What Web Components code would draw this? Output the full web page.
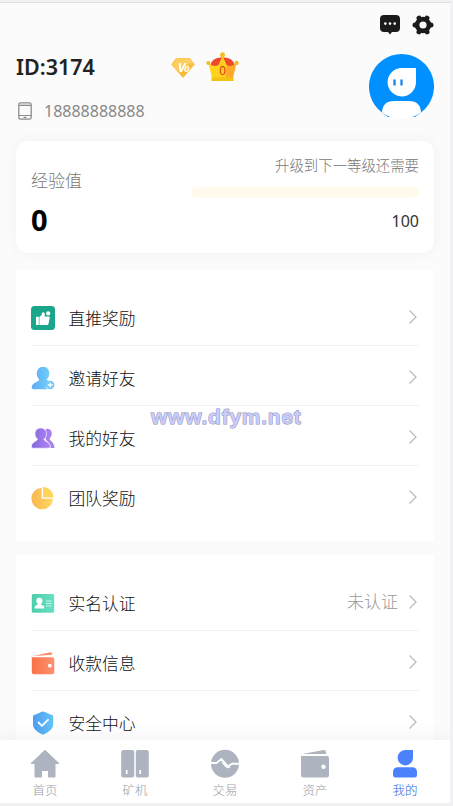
<!DOCTYPE html>
<html lang="zh-CN">
<head>
<meta charset="utf-8">
<title>我的</title>
<style>
html, body { margin: 0; height: 100%; overflow: hidden; }
body { background: #f1f1f3; font-family: "Noto Sans", "Noto Sans CJK SC", sans-serif; color: #222; }
</style>
</head>
<body>
<profile-page></profile-page>
<script>
const icons = {
  chat: '<svg viewBox="0 0 22 22"><path fill="#1b1b1b" d="M5 1h12q4 0 4 4v9q0 4-4 4h-4l-2 2.500L9 18H5q-4 0-4-4V5q0-4 4-4z"/><g fill="#fff"><circle cx="6.300" cy="9.600" r="1.300"/><circle cx="11" cy="9.600" r="1.300"/><circle cx="15.700" cy="9.600" r="1.300"/></g></svg>',
  gear: '<svg viewBox="0 0 22 22"><circle cx="11" cy="11" r="5.900" fill="none" stroke="#1b1b1b" stroke-width="4.600"/><path stroke="#1b1b1b" stroke-width="5" stroke-linecap="round" d="M3 11h1M18 11h1M7 4.100l.5.900M14.500 17l.5.900M15 4.100l-.5.900M7.500 17l-.5.900"/></svg>',
  phone: '<svg viewBox="0 0 14 18"><rect x=".8" y=".8" width="12.400" height="16.400" rx="1.800" fill="#fbfbfb" stroke="#8b8b8b" stroke-width="1.300"/><path d="M1 3.500h12M1 13.500h12" stroke="#8b8b8b"/><path d="M1.500 2.300h11" stroke="#ccc"/><path d="M5.500 15.500h3" stroke="#8b8b8b" stroke-width="1.300"/></svg>',
  gem: '<svg viewBox="0 0 24 20"><defs><linearGradient id="g"><stop stop-color="#f8bd35"/><stop offset="1" stop-color="#fdc85b"/></linearGradient></defs><path fill="url(#g)" stroke="url(#g)" stroke-linejoin="round" d="M5 .6h14l4.300 6L12 19.400.7 6.600z"/><path fill="#ffdb78" d="M5 .6h14l2 3L5 13 .7 6.600z" opacity=".5"/><path fill="#f4ad22" d="m12 19.400 11.300-12.800L19 6l-10 10z" opacity=".4"/></svg>',
  crown: '<svg viewBox="0 0 33 30"><path fill="#ed4a2b" d="M4.500 13Q6 6 14 5.500h5Q27 6 28.500 13L25 17H8z"/><path fill="#ffd31c" d="M2.500 11Q7 15.500 12.500 13L16.500 4l.5 4v18H6z"/><path fill="#ffa92b" d="M30.500 11Q26 15.500 20.500 13L16.500 4v22H27z"/><path fill="#ffd31c" d="M16.500 4l4 9-1 13h-3z"/><path fill="#f4c312" d="M5.500 25.500h22V29h-22z"/><circle cx="16.500" cy="2.700" r="2.500" fill="#f5bf24"/><circle cx="2.300" cy="11" r="2" fill="#f6b928"/><circle cx="30.500" cy="11" r="2.200" fill="#f6b928"/></svg>',
  avatar: '<svg viewBox="0 0 65 65"><path fill="#0090ff" d="M32.500 0A32.500 32.500 0 0 1 52 58.500L46 63H19l-6-4.500A32.500 32.500 0 0 1 32.500 0z"/><path fill="#fff" d="M33 14h14v14.500a14.200 14.200 0 1 1-14-14.500z"/><path fill="#fff" d="M13 58.500Q13.500 47 25 47h15q11.500 0 12 11.500-8.500 6.500-19.500 6.500T13 58.500z"/><path stroke="#1685e8" stroke-width="2.300" d="M25.500 25.500v6M32.500 25.500v6"/></svg>',
  thumb: '<svg viewBox="0 0 24 24"><rect width="24" height="24" rx="3.500" fill="#1ba58a"/><path fill="#fff" d="M5 10.700h2.800V19H5zM8.400 11q2.900-1.500 2.600-4 1-1.700 2.700.3.500 1.500-.2 3.200H18q1 .4.600 1.700L17.500 18q-.3 1-1.500 1H8.400z"/><circle cx="17.200" cy="7.400" r="2.100" fill="#fff"/></svg>',
  invite: '<svg viewBox="0 0 24 24"><defs><linearGradient id="i"><stop stop-color="#5dabf5"/><stop offset="1" stop-color="#70cdfb"/></linearGradient></defs><path fill="url(#i)" d="M12 .7c-4 0-6.200 3-6.200 7 0 3 1.400 4.300 2.400 6C8.200 15.500.7 16.500.7 21.500q0 1.700 1.800 1.700h14q-2.500-3-.8-6 .6-1.500 2-2.200-2-.7-2-1.500 2.600-2 2.600-6c0-4-2.300-6.800-6.300-6.800z"/><circle cx="19.200" cy="19" r="4.200" fill="#72c7f9"/><path stroke="#fff" stroke-width="1.300" d="M16.800 19h4.800m-2.400-2.400v4.800"/></svg>',
  friends: '<svg viewBox="0 0 24 24"><defs><linearGradient id="f"><stop stop-color="#8069dd"/><stop offset="1" stop-color="#b383f5"/></linearGradient></defs><path fill="#a680ec" d="M15 3q4-1 5.500 2.500c1 3-.4 5.300-2 7.500 0 1.500 4.700 2.500 5 9h-4q0-5-4-7.500l-1-1.500z"/><path fill="url(#f)" stroke="#fff" stroke-width=".6" d="M9.700 2C6 2 4 4.500 4 8c0 2.500 1.300 4 2.500 5.300C6 15.500.5 16 .4 20.500q0 1.700 1.700 1.700h15.500q1.700 0 1.700-1.700c-.2-4.500-5.800-5-6.300-7.200C14.300 12 15.600 10.500 15.600 8 15.600 4.500 13.500 2 9.700 2z"/></svg>',
  pie: '<svg viewBox="0 0 24 24"><defs><linearGradient id="p"><stop stop-color="#f8b653"/><stop offset="1" stop-color="#ffd85c"/></linearGradient></defs><path fill="url(#p)" d="M10.700 1.700V12.800H22A10.800 10.800 0 1 1 10.700 1.700z"/><path fill="#ffd45a" d="M12 .7A11 11 0 0 1 22.600 11.500H12z"/></svg>',
  id: '<svg viewBox="0 0 24 24"><defs><linearGradient id="d"><stop stop-color="#4ccfa8"/><stop offset="1" stop-color="#69dfc5"/></linearGradient></defs><rect x=".8" y="3" width="22.400" height="18.700" rx="1.500" fill="url(#d)"/><path fill="#fff" d="M8.300 6.800q3.200 0 3.200 3.300 0 1.600-1.500 3 0 1 2 1.500 1.400.6 1.400 2.800H3.500q0-2.200 1.300-2.800 2-.5 2-1.500-1.500-1.400-1.500-3 0-3.300 3-3.300z"/><path stroke="#c8f5ea" stroke-width="1.100" d="M15 10h5.500m-5.500 2.500h5.500M15 15h5.500"/></svg>',
  wallet: '<svg viewBox="0 0 24 24"><defs><linearGradient id="w"><stop stop-color="#fb7248"/><stop offset="1" stop-color="#fd9171"/></linearGradient></defs><path fill="url(#w)" d="M2.500 5 19.500 1.200q1.300-.1 1.600 1.500l.2 1z"/><path fill="url(#w)" d="M.8 5.300q0 .8 1.500.9h19q2 0 2 2v13q0 2-2 2H2.800q-2 0-2-2z"/><circle cx="18.800" cy="14.700" r="1.900" fill="#fff"/></svg>',
  shield: '<svg viewBox="0 0 24 24"><defs><linearGradient id="s"><stop stop-color="#4f9cf1"/><stop offset="1" stop-color="#63c5f9"/></linearGradient></defs><path fill="url(#s)" d="M12 .5q1 0 2 .6 3.500 2.200 7.200 3 1 .3 1 1.400V13c0 5-4.500 8.200-10.200 10.800C6.300 21.200 2 18 2 13V5.500q0-1.200 1-1.400 3.700-.8 7-3Q11 .5 12 .5z"/><path fill="none" stroke="#fff" stroke-width="1.800" stroke-linecap="round" d="m7.500 11.500 3.500 3.300 6-6"/></svg>',
  home: '<svg viewBox="0 0 30 30"><path fill="#adb3bf" stroke="#adb3bf" stroke-linejoin="round" d="M15 1.300 29 14.500h-4V28h-6.500v-6.500h-7V28H5V14.500H1z"/></svg>',
  miner: '<svg viewBox="0 0 30 30"><g fill="#adb3bf"><rect x="1.200" y="1" width="13" height="27.500" rx="2"/><rect x="15.800" y="1" width="13" height="27.500" rx="2"/></g><path stroke="#fff" stroke-width="1.700" d="M6.700 21v4M20.200 21v4"/></svg>',
  trade: '<svg viewBox="0 0 30 30"><circle cx="15" cy="14.800" r="14" fill="#adb3bf"/><path fill="none" stroke="#fff" stroke-width="1.900" stroke-linejoin="round" d="M0 14h6.500l5-4 6.500 7.500 4-2.700h8"/><path fill="none" stroke="#fff" stroke-width="1.300" d="m12 13 4 4.500q2 2 4 .2"/></svg>',
  assets: '<svg viewBox="0 0 30 30"><g fill="#adb3bf"><path d="m2.500 5 21-4q2.500-.2 2.500 2.200V5z"/><path d="M1 6.500q1 .5 2 .5h24q2 0 2 2v17q0 2.500-2.500 2.500h-23Q1 28.500 1 26z"/></g><circle cx="23.500" cy="17.800" r="2.200" fill="#fff"/></svg>',
  me: '<svg viewBox="0 0 30 30"><path fill="#4b82fb" d="M15 1h8v7.500A7.700 7.700 0 1 1 15 1zM8 18.200h14q5 0 5 5v3q0 2.300-2.500 2.300h-19Q3 28.500 3 26.200v-3q0-5 5-5z"/></svg>'
};
const define = (name, html) => customElements.define(name, class extends HTMLElement {
  connectedCallback() {
    if (!this.shadowRoot) this.attachShadow({ mode: 'open' }).innerHTML = typeof html === 'function' ? html(this) : html;
  }
});

define('ui-icon', el => `<style>:host{display:block;flex:none}svg{display:block;width:100%;height:100%}</style>${icons[el.getAttribute('name')]}`);

define('profile-header', `<style>
:host{display:flex;justify-content:space-between;height:138px;padding:0 16px;box-sizing:border-box}
.info{padding-top:51px}
.id{display:flex;align-items:center;height:28px}
b{width:155px;font:600 21.500px/28px "Noto Sans",sans-serif;color:#222;margin-top:-2px}
.badge{display:grid;place-items:center}
.badge>*{grid-area:1/1}
.gem{width:24px;height:20px}
.gem-text{color:#fff;font:italic 700 13px/18px "Open Sans",sans-serif;letter-spacing:-1px}
.gem-text small{font-size:9px}
.crown{width:33px;height:30px}
.level{margin-left:11px;margin-top:-2px}
.level span{font:12px/14px "Liberation Sans",sans-serif;color:#d8351c;padding-top:8px}
.phone{display:flex;align-items:center;gap:13px;margin-top:18px;padding-left:2px;font-size:16px;line-height:22px;color:#888}
.phone ui-icon{width:14px;height:18px}
.phone span{margin-left:-1px}
.side{display:flex;flex-direction:column;align-items:flex-end;padding-top:11px}
.tools{display:flex;gap:11px}
.tools ui-icon{width:22px;height:22px}
.avatar{width:65px;height:65px;margin-top:18px}
</style>
<div class="info"><div class="id"><b>ID:3174</b><div class="badge"><ui-icon class="gem" name="gem"></ui-icon><span class="gem-text">V<small>0</small></span></div><div class="badge level"><ui-icon class="crown" name="crown"></ui-icon><span>0</span></div></div>
<div class="phone"><ui-icon name="phone"></ui-icon><span>18888888888</span></div></div>
<div class="side"><div class="tools"><ui-icon name="chat"></ui-icon><ui-icon name="gear"></ui-icon></div><ui-icon class="avatar" name="avatar"></ui-icon></div>`);

define('experience-card', `<style>
:host{display:flex;justify-content:space-between;box-sizing:border-box;height:112px;margin:0 16px;padding:0 15px;border-radius:12px;background:#fff;box-shadow:0 0 14px rgba(0,0,0,.045)}
.left{padding-top:27px;font-size:17px;line-height:26px;color:#777;font-weight:300}
b{display:block;font-size:29px;line-height:34px;margin-top:9px;color:#000;font-weight:700}
.right{width:228px;text-align:right;padding-top:14px}
.hint{font-size:14.400px;line-height:22px;color:#777;font-weight:300}
.bar{height:11px;border-radius:6px;background:#fffaeb;margin-top:10px}
.need{font-size:16px;line-height:22px;margin-top:12px;color:#333}
</style><div class="left">经验值<b>0</b></div><div class="right"><div class="hint">升级到下一等级还需要</div><div class="bar"></div><div class="need">100</div></div>`);

define('menu-card', `<style>:host{display:block;background:#fff;margin:0 16px;padding:16px 15px 15px}</style><slot></slot>`);

define('menu-row', el => `<style>
:host{display:flex;align-items:center;height:60px;box-sizing:border-box;border-bottom:1px solid #f1f1f3}
:host(:last-child){border-color:transparent}
ui-icon{width:24px;height:24px;margin-top:5px}
.label{flex:1;margin-left:13.500px;padding-top:6px;font-size:16.800px;line-height:26px;font-weight:300;color:#111}
.value{font-size:17px;line-height:26px;font-weight:300;color:#999;margin-right:10px;padding-top:2px}
svg{width:10px;height:16px;margin-right:1px;margin-top:2px}
</style><ui-icon name="${el.getAttribute('icon')}"></ui-icon><span class="label"><slot></slot></span><span class="value"><slot name="value"></slot></span><svg viewBox="0 0 10 16"><path d="m1.500 1.500 6.500 6.500-6.500 6.500" fill="none" stroke="#bcbcbc" stroke-width="1.300"/></svg>`);

define('tab-item', el => `<style>
:host{flex:1;display:flex;flex-direction:column;align-items:center;padding-top:9px;color:#979eab}
:host([active]){color:#2f65e6}
ui-icon{width:30px;height:30px}
span{font-size:12.500px;line-height:18px;margin-top:3px;font-weight:300}
</style><ui-icon name="${el.getAttribute('icon')}"></ui-icon><span><slot></slot></span>`);

define('tab-bar', `<style>:host{display:flex;position:absolute;left:0;right:0;bottom:0;height:63px;background:#fff;box-shadow:0 0 20px rgba(0,0,0,.07)}</style><slot></slot>`);

define('site-mark', `<style>:host{position:absolute;left:151px;top:402px;font:700 21px/26px "Liberation Sans",sans-serif;letter-spacing:.75px;color:#c9ccf8;-webkit-text-stroke:1px #8c8eb9;paint-order:stroke fill;white-space:nowrap}</style><slot></slot>`);

define('profile-page', `<style>
:host{display:block;position:relative;box-sizing:border-box;width:450px;height:803px;border-top:2px solid #f1f1f3;background:#fbfbfb;overflow:hidden}
main{border-top:1px solid #dedede}
.first{margin-top:17px}.second{margin-top:14px}
</style><main><profile-header></profile-header><experience-card></experience-card>
<menu-card class="first"><menu-row icon="thumb">直推奖励</menu-row><menu-row icon="invite">邀请好友</menu-row><menu-row icon="friends">我的好友</menu-row><menu-row icon="pie">团队奖励</menu-row></menu-card>
<menu-card class="second"><menu-row icon="id">实名认证<span slot="value">未认证</span></menu-row><menu-row icon="wallet">收款信息</menu-row><menu-row icon="shield">安全中心</menu-row><menu-row icon="gear">设置</menu-row></menu-card></main>
<tab-bar><tab-item icon="home">首页</tab-item><tab-item icon="miner">矿机</tab-item><tab-item icon="trade">交易</tab-item><tab-item icon="assets">资产</tab-item><tab-item icon="me" active>我的</tab-item></tab-bar>
<site-mark>www.dfym.net</site-mark>`);
</script>
</body>
</html>
